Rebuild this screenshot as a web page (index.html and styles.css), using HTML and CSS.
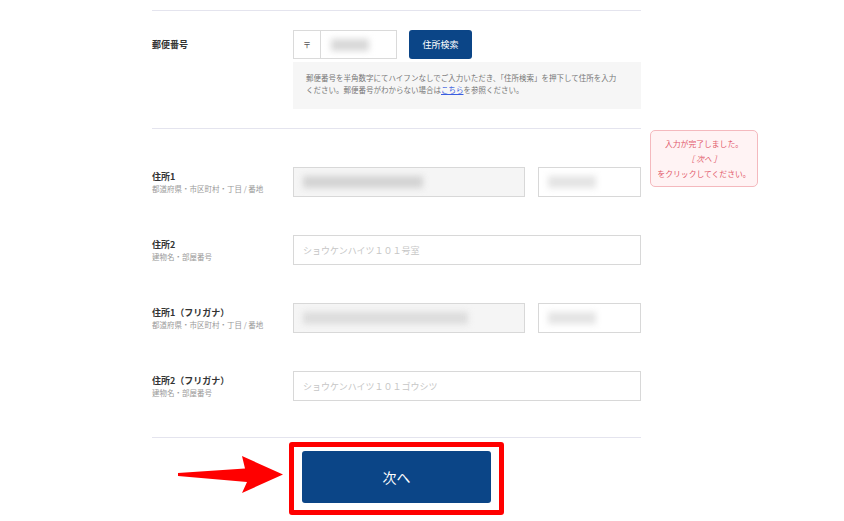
FILE: index.html
```html
<!DOCTYPE html>
<html lang="ja">
<head>
    <meta charset="UTF-8">
    <meta name="viewport" content="width=device-width, initial-scale=1.0">
    <title>住所入力</title>
    <link rel="stylesheet" href="styles.css">
</head>
<body>
    <div class="form">
        <!-- 郵便番号 -->
        <div class="section postal">
            <div class="row row-top">
                <div class="label">
                    <span class="label-main">郵便番号</span>
                </div>
                <div class="field">
                    <div class="zip-line">
                        <div class="zip-box">
                            <span class="zip-mark">〒</span>
                            <span class="zip-value"><span class="blur blur-zip"></span></span>
                        </div>
                        <button class="search-btn">住所検索</button>
                    </div>
                    <p class="help">郵便番号を半角数字にてハイフンなしでご入力いただき、「住所検索」を押下して住所を入力ください。郵便番号がわからない場合は<a href="#">こちら</a>を参照ください。</p>
                </div>
            </div>
        </div>

        <!-- 住所 -->
        <div class="section address">
            <div class="row">
                <div class="label">
                    <span class="label-main">住所1</span>
                    <span class="label-sub">都道府県・市区町村・丁目 / 番地</span>
                </div>
                <div class="field split">
                    <div class="input filled wide"><span class="blur blur-a"></span></div>
                    <div class="input narrow"><span class="blur blur-b"></span></div>
                </div>
            </div>
            <div class="row">
                <div class="label">
                    <span class="label-main">住所2</span>
                    <span class="label-sub">建物名・部屋番号</span>
                </div>
                <div class="field">
                    <input class="input" type="text" placeholder="ショウケンハイツ１０１号室">
                </div>
            </div>
            <div class="row">
                <div class="label">
                    <span class="label-main">住所1（フリガナ）</span>
                    <span class="label-sub">都道府県・市区町村・丁目 / 番地</span>
                </div>
                <div class="field split">
                    <div class="input filled wide"><span class="blur blur-c"></span></div>
                    <div class="input narrow"><span class="blur blur-b"></span></div>
                </div>
            </div>
            <div class="row">
                <div class="label">
                    <span class="label-main">住所2（フリガナ）</span>
                    <span class="label-sub">建物名・部屋番号</span>
                </div>
                <div class="field">
                    <input class="input" type="text" placeholder="ショウケンハイツ１０１ゴウシツ">
                </div>
            </div>

            <!-- 入力完了の吹き出し -->
            <div class="notice">
                入力が完了しました。<br>
                <i>［ 次へ ］</i><br>
                をクリックしてください。
            </div>
        </div>

        <!-- 次へボタン -->
        <div class="submit-row">
            <svg class="arrow" width="105" height="38" viewBox="0 0 105 38">
                <polygon points="0,17 67,12.5 64,0 105,18.5 64,37 69,26 0,20" fill="#ff0000"/>
            </svg>
            <div class="highlight">
                <button class="next-btn">次へ</button>
            </div>
        </div>
    </div>
</body>
</html>
```

FILE: styles.css
```css
body {
    margin: 0;
    font-family: 'Noto Sans CJK JP', 'Noto Sans', sans-serif;
    background-color: #fff;
    color: #333;
}
.form {
    width: 489px;
    margin-left: 152px;
}
.section {
    border-top: 1px solid #e4e4ee;
}
.postal {
    margin-top: 10px;
    padding: 19px 0;
}
.address {
    position: relative;
    padding: 38px 0 36px;
    border-bottom: 1px solid #e4e4ee;
    display: flex;
    flex-direction: column;
    gap: 38px;
}
.row {
    display: flex;
    align-items: center;
}
.row-top {
    align-items: flex-start;
}
.label {
    width: 141px;
    flex-shrink: 0;
    display: flex;
    flex-direction: column;
}
.label-main {
    font-size: 9px;
    font-weight: bold;
    line-height: 12px;
    color: #333;
}
.row-top .label-main {
    line-height: 29px;
}
.label-sub {
    font-size: 7.5px;
    line-height: 11px;
    color: #999;
}
.field {
    flex: 1;
}
.split {
    display: flex;
    gap: 13px;
}

/* 郵便番号 */
.zip-line {
    display: flex;
    gap: 12px;
}
.zip-box {
    display: flex;
    width: 104px;
    height: 29px;
    box-sizing: border-box;
    border: 1px solid #dadada;
}
.zip-mark {
    width: 26px;
    border-right: 1px solid #dadada;
    font-size: 8px;
    line-height: 27px;
    text-align: center;
    color: #555;
}
.zip-value {
    flex: 1;
    display: flex;
    align-items: center;
    padding-left: 10px;
}
.search-btn {
    width: 63px;
    height: 29px;
    border: none;
    border-radius: 3px;
    background-color: #0b4587;
    color: #fff;
    font-family: inherit;
    font-size: 9px;
    padding: 0;
}
.help {
    margin: 3px 0 0;
    padding: 10px 18px 13px 13px;
    background-color: #f6f6f6;
    font-size: 7.5px;
    line-height: 12px;
    color: #777;
}
.help a {
    color: #3a5ee0;
}

/* 入力欄 */
.input {
    display: flex;
    align-items: center;
    width: 100%;
    height: 30px;
    box-sizing: border-box;
    border: 1px solid #d8d8d8;
    background-color: #fff;
    padding: 0 9px;
    font-family: inherit;
    font-size: 9px;
    color: #333;
    outline: none;
}
.input::placeholder {
    color: #c6c6c6;
}
.filled {
    background-color: #f5f5f5;
}
.wide {
    width: 232px;
}
.narrow {
    width: 103px;
}
.blur {
    display: block;
    height: 12px;
    background-color: #d3d3d3;
    filter: blur(3px);
}
.blur-zip {
    width: 38px;
    background-color: #d8d8d8;
}
.blur-a {
    width: 120px;
}
.blur-b {
    width: 48px;
    background-color: #e4e4e4;
}
.blur-c {
    width: 165px;
    background-color: #dcdcdc;
}

/* 吹き出し */
.notice {
    position: absolute;
    left: 498px;
    top: 1px;
    width: 108px;
    box-sizing: border-box;
    padding: 5px 0;
    border: 1px solid #f4b9be;
    border-radius: 5px;
    background-color: #fff3f4;
    color: #e25a6b;
    font-size: 7.8px;
    line-height: 15px;
    text-align: center;
}
.notice i {
    font-style: italic;
}

/* 次へ */
.submit-row {
    display: flex;
    align-items: center;
    padding: 4px 0 0 26px;
}
.arrow {
    display: block;
    margin-right: 6px;
    margin-top: -8px;
}
.highlight {
    border: 5px solid #ff0000;
    border-radius: 3px;
    padding: 4px 8px 7px;
}
.next-btn {
    display: block;
    width: 189px;
    height: 52px;
    border: none;
    border-radius: 3px;
    background-color: #0b4587;
    color: #fff;
    font-family: inherit;
    font-size: 14px;
}
```
